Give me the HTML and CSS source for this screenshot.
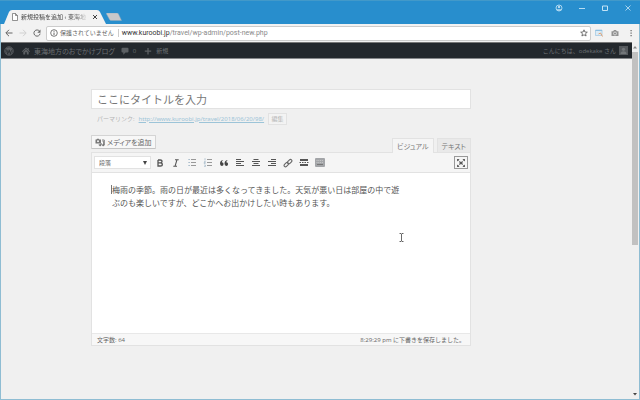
FILE: index.html
```html
<!DOCTYPE html>
<html lang="ja">
<head>
  <meta charset="UTF-8">
  <title>新規投稿を追加 ‹ 東海地方のおでかけブログ</title>
  <link rel="stylesheet" href="styles.css">
</head>
<body>

  <div class="window">
    <header class="titlebar">
      <div class="tab">
        <svg class="tab-shape" viewBox="0 0 102 14" preserveAspectRatio="none"><path d="M0 14 L5 2 Q6 0 8 0 H93 Q95 0 96 2 L102 14Z" fill="#f2f2f2"/></svg>
        <svg class="tab-icon" viewBox="0 0 6 8"><path d="M.5.5H3.5L5.5 2.5V7.5H.5ZM3.5.5V2.5H5.5" fill="#fff" stroke="#666" stroke-width=".7"/></svg>
        <span class="tab-title">新規投稿を追加 ‹ 東海地</span>
        <button class="tab-close" aria-label="閉じる"><svg viewBox="0 0 6 6"><path d="M1 1L5 5M5 1L1 5" stroke="#444"/></svg></button>
      </div>
      <svg class="new-tab" viewBox="0 0 16 8"><path d="M1 0H11Q12 0 12.5 1L15.5 7.5H5Q4 7.5 3.5 6.5L.5 1Q0 0 1 0Z" fill="#c8c8ca" stroke="#8aa9bd" stroke-width=".5"/></svg>
      <div class="controls">
        <button aria-label="ユーザー"><svg viewBox="0 0 8 8"><circle cx="4" cy="4" r="3" fill="none" stroke="#b7dcf2" stroke-width=".9"/><circle cx="4" cy="3" r="1.2" fill="#b7dcf2"/><path d="M1.5 5.2H6.5Q5.8 6.8 4 6.8T1.5 5.2Z" fill="#b7dcf2"/></svg></button>
        <button aria-label="最小化"><svg viewBox="0 0 8 8"><path d="M1 4.5H7" stroke="#b7dcf2"/></svg></button>
        <button aria-label="最大化"><svg viewBox="0 0 8 8"><path d="M1.5 2H6.5V6.5H1.5Z" fill="none" stroke="#c4e3f5"/></svg></button>
        <button aria-label="ウィンドウを閉じる"><svg viewBox="0 0 8 8"><path d="M1.5 1.5L6.5 6.5M6.5 1.5L1.5 6.5" stroke="#b7dcf2" stroke-width=".9"/></svg></button>
      </div>
    </header>

    <nav class="browser-bar">
      <button aria-label="戻る"><svg viewBox="0 0 8 8"><path d="M7.5 4H1M4 .8L.8 4L4 7.2" fill="none" stroke="#666"/></svg></button>
      <button aria-label="進む"><svg viewBox="0 0 8 8"><path d="M.5 4H7M4 .8L7.2 4L4 7.2" fill="none" stroke="#d0d0d0"/></svg></button>
      <button aria-label="再読み込み"><svg viewBox="0 0 8 8"><path d="M6.6 2.3A3.1 3.1 0 1 0 7.1 4.6" fill="none" stroke="#666"/><path d="M7.5.5V3.7H4.3Z" fill="#666"/></svg></button>
      <div class="address">
        <svg class="info" viewBox="0 0 8 8"><circle cx="4" cy="4" r="3.3" fill="none" stroke="#555" stroke-width=".8"/><path d="M4 3.5V6M4 1.9V2.8" stroke="#555" stroke-width=".9"/></svg>
        <span class="secure">保護されていません</span>
        <span class="url"><b>www.kuroobi.jp</b>/travel/wp-admin/post-new.php</span>
        <button aria-label="ブックマーク"><svg viewBox="0 0 8 8"><path d="M4 .8L4.9 3L7.3 3.2L5.5 4.7L6.1 7L4 5.8L1.9 7L2.5 4.7L.7 3.2L3.1 3Z" fill="none" stroke="#555" stroke-width=".8"/></svg></button>
      </div>
      <div class="extensions">
        <button aria-label="拡張機能"><svg viewBox="0 0 8 8"><path d="M.5 1H7V6.5H.5Z" fill="#dcebf5" stroke="#9cc5e2" stroke-width=".7"/><path d="M.5 1.5H7" stroke="#8fbfe0"/><path d="M3.5 5L5.5 4L7.5 7.5" fill="none" stroke="#e2a070"/></svg></button>
        <button aria-label="カメラ"><svg viewBox="0 0 8 8"><path d="M.5 2.2H2.2L3 1H5L5.8 2.2H7.5V7H.5Z" fill="#929292"/><circle cx="4" cy="4.5" r="1.5" fill="none" stroke="#eee" stroke-width=".7"/></svg></button>
        <button aria-label="メニュー"><svg viewBox="0 0 8 8"><path d="M3.5 1H4.7V2.2H3.5ZM3.5 3.5H4.7V4.7H3.5ZM3.5 6H4.7V7.2H3.5Z" fill="#666"/></svg></button>
      </div>
    </nav>

    <div class="viewport">
      <div class="page">
        <nav class="adminbar">
          <a href="#" aria-label="WordPress"><svg class="wp" viewBox="0 0 10 10"><circle cx="5" cy="5" r="4.4" fill="none" stroke="#5c6064" stroke-width=".7"/><circle cx="5" cy="5" r="3.7" fill="#5c6064"/><path d="M1.8 3.4L3.7 8L5 4.4L6.4 8L7.9 3.8M2.8 3.4L4.2 7M5 3.4L6.6 7.2" fill="none" stroke="#23282d" stroke-width=".7"/></svg></a>
          <a href="#" class="site"><svg viewBox="0 0 8 8"><path d="M0 4.3L4 .6L5.6 2V1H6.7V3L8 4.3L7.4 5L4 1.9L.6 5ZM1.3 5L4 2.6L6.7 5V7.6H4.8V5.2H3.2V7.6H1.3Z" fill="#5c6064"/></svg>東海地方のおでかけブログ</a>
          <a href="#" class="comments"><svg viewBox="0 0 8 8"><path d="M1.5.7H6.5Q7.5.7 7.5 1.7V4.5Q7.5 5.5 6.5 5.5H4.5L2.3 7.8V5.5H1.5Q.5 5.5.5 4.5V1.7Q.5.7 1.5.7Z" fill="#5c6064"/></svg>0</a>
          <a href="#" class="new"><svg viewBox="0 0 8 8"><path d="M4 1V7.5M.8 4.2H7.2" stroke="#5c6064" stroke-width="1.3"/></svg>新規</a>
          <a href="#" class="account">こんにちは、odekake さん<svg viewBox="0 0 9 9"><path d="M0 0H9V9H0Z" fill="#55595d"/><circle cx="4.5" cy="3.3" r="1.6" fill="#73777a"/><path d="M1.5 8Q1.5 5.2 4.5 5.2T7.5 8Z" fill="#73777a"/></svg></a>
        </nav>

        <main class="editor-column">
          <input class="post-title" type="text" aria-label="タイトル" placeholder="ここにタイトルを入力">
          <div class="permalink">
            <span>パーマリンク:</span>
            <a href="#">http://www.kuroobi.jp/travel/2018/06/20/98/</a>
            <button>編集</button>
          </div>

          <div class="editor-head">
            <button class="add-media"><svg viewBox="0 0 10 9"><path d="M.5 1.5H1.5L2 .7H3.8L4.3 1.5H6V5.5H.5Z" fill="#777"/><circle cx="3" cy="3.3" r="1" fill="#f7f7f7"/><path d="M7 2H9.3V7H8.6V3.3H7.5M4 6.5V7.2M6.2 5V7" fill="none" stroke="#777" stroke-width=".9"/><circle cx="5.2" cy="7.2" r="1.1" fill="#777"/><circle cx="8.2" cy="7.2" r="1.1" fill="#777"/></svg>メディアを追加</button>
            <div class="mode-tabs">
              <button class="mode active">ビジュアル</button>
              <button class="mode">テキスト</button>
            </div>
          </div>

          <section class="editor">
            <div class="tools">
              <div class="format">
                <select aria-label="書式"><option>段落</option></select>
              </div>
              <button aria-label="太字"><svg viewBox="0 0 10 10"><path d="M3 2H5.3Q7 2 7 3.4T5.3 4.8H3M5.3 4.8Q7.3 4.8 7.3 6.4T5.3 8H3V2" fill="none" stroke="#555" stroke-width="1.3"/></svg></button>
              <button aria-label="斜体"><svg viewBox="0 0 10 10"><path d="M4 1.7H7.7M2.3 8.3H6M6 1.7L4 8.3" stroke="#555" stroke-width="1.1"/></svg></button>
              <button aria-label="箇条書き"><svg viewBox="0 0 10 10"><path d="M4 1.5H9M4 4.5H9M4 7.5H9" stroke="#999"/><path d="M1.5 1.5H2.7M1.5 4.5H2.7M1.5 7.5H2.7" stroke="#8fa9bd" stroke-width="1.2"/></svg></button>
              <button aria-label="番号付きリスト"><svg viewBox="0 0 10 10"><path d="M4 1.5H9M4 4.5H9M4 7.5H9" stroke="#999"/><path d="M2 .2V2.5M1.2 3.5H2.3V4.5H1.2V5.5H2.5M1.2 7H2.4V8.5H1.2" fill="none" stroke="#8fa9bd" stroke-width=".6"/></svg></button>
              <button aria-label="引用"><svg viewBox="0 0 10 10"><path d="M4.5 2Q3 2.4 2.8 4.2Q4.6 4.3 4.6 6Q4.5 8 2.8 8Q1 8 1 5.6Q1.1 2.2 4.5 2ZM9 2Q7.5 2.4 7.3 4.2Q9.1 4.3 9.1 6Q9 8 7.3 8Q5.5 8 5.5 5.6Q5.6 2.2 9 2Z" fill="#444"/></svg></button>
              <button aria-label="左寄せ"><svg viewBox="0 0 10 10"><path d="M1 1.5H6M1 3.5H9M1 5.5H6M1 7.5H9" stroke="#555"/></svg></button>
              <button aria-label="中央揃え"><svg viewBox="0 0 10 10"><path d="M2.5 1.5H7.5M1 3.5H9M2.5 5.5H7.5M1 7.5H9" stroke="#555"/></svg></button>
              <button aria-label="右寄せ"><svg viewBox="0 0 10 10"><path d="M4 1.5H9M1 3.5H9M4 5.5H9M1 7.5H9" stroke="#555"/></svg></button>
              <button aria-label="リンクの挿入"><svg viewBox="0 0 10 10"><g fill="none" stroke="#666" stroke-width="1.1"><rect x="4.2" y="2.2" width="5" height="2.8" rx="1.4" transform="rotate(-45 6.7 3.6)"/><rect x=".8" y="5.2" width="5" height="2.8" rx="1.4" transform="rotate(-45 3.3 6.6)"/></g></svg></button>
              <button aria-label="続きを読む"><svg viewBox="0 0 10 10"><path d="M1 1H9V3H1ZM1 6H9V8H1Z" fill="#555"/><path d="M.5 4.5H9.5" stroke="#555" stroke-dasharray="1.5 1"/></svg></button>
              <button aria-label="ツールバー切り替え"><svg viewBox="0 0 10 10"><rect width="10" height="9" rx="1" fill="#a3a5a8"/><path d="M1.5 2.5H8.5M1.5 4.5H8.5" stroke="#d0d0d0" stroke-width=".8" stroke-dasharray="1 .8"/><path d="M2 6.5H8" stroke="#777"/></svg></button>
              <button class="fullscreen" aria-label="集中執筆モード"><svg viewBox="0 0 10 10"><path d="M1 1H3.6L1 3.6ZM9 1V3.6L6.4 1ZM1 9V6.4L3.6 9ZM9 9H6.4L9 6.4Z" fill="#555"/><path d="M1.5 1.5L8.5 8.5M8.5 1.5L1.5 8.5" stroke="#777" stroke-width=".7"/><path d="M3.5 3.7H6.5V6.3H3.5Z" fill="#555"/></svg></button>
            </div>
            <div class="writing">
              <textarea aria-label="本文" spellcheck="false">梅雨の季節。雨の日が最近は多くなってきました。天気が悪い日は部屋の中で遊ぶのも楽しいですが、どこかへお出かけしたい時もあります。</textarea>
              <span class="caret"></span>
            </div>
            <footer class="status">
              <span>文字数: 64</span>
              <span>8:29:29 pm に下書きを保存しました。</span>
            </footer>
          </section>
        </main>
      </div>

      <div class="scrollbar">
        <svg viewBox="0 0 6 6"><path d="M1 4.5L3 2L5 4.5Z" fill="#888"/></svg>
        <div class="thumb"></div>
        <svg class="down" viewBox="0 0 6 6"><path d="M1 2L3 4.5L5 2Z" fill="#444"/></svg>
      </div>
    </div>

    <svg class="pointer" viewBox="0 0 5 9"><path d="M.5.5H2L2.5 1L3 .5H4.5M2.5 1V8M.5 8.5H2L2.5 8L3 8.5H4.5" fill="none" stroke="#444" stroke-width=".8"/></svg>
  </div>

</body>
</html>
```
FILE: styles.css
```css
* {
  box-sizing: border-box;
}
body {
  margin: 0;
  font-family: "Open Sans", "Noto Sans CJK JP", sans-serif;
  font-size: 6px;
  color: #666;
}
button, input, select, textarea {
  font: inherit;
  color: inherit;
  margin: 0;
  padding: 0;
  border: 0;
  background: none;
}
svg {
  display: block;
  flex: none;
  width: 8px;
  height: 8px;
}
a {
  color: inherit;
  text-decoration: none;
}
.window {
  position: relative;
  display: flex;
  flex-direction: column;
  height: 100vh;
  border: 1px solid #8fbdd3;
  border-top: 0;
  background: #f0f0f0;
}

/* browser frame */
.titlebar {
  display: flex;
  height: 24px;
  margin: 0 -1px;
  padding-left: 4px;
  background: #288ecd;
  border-top: 1px solid #4299c9;
}
.tab {
  position: relative;
  display: flex;
  align-items: center;
  align-self: flex-end;
  width: 102px;
  height: 14px;
  padding: 0 8px;
}
.tab-shape {
  position: absolute;
  left: 0;
  top: 0;
  width: 100%;
  height: 100%;
}
.tab-icon {
  position: relative;
  width: 6px;
  margin-right: 3px;
}
.tab-title {
  position: relative;
  flex: 1;
  white-space: nowrap;
  line-height: 10px;
  color: #444;
  -webkit-mask-image: linear-gradient(90deg, #000 75%, transparent);
  mask-image: linear-gradient(90deg, #000 75%, transparent);
}
.tab-close {
  position: relative;
  margin-left: 3px;
}
.tab-close svg {
  width: 6px;
  height: 6px;
}
.new-tab {
  width: 16px;
  align-self: flex-end;
  margin-bottom: 3px;
}
.controls {
  display: flex;
  gap: 15px;
  height: 14px;
  margin-left: auto;
  padding-right: 8px;
}
.browser-bar {
  display: flex;
  align-items: center;
  gap: 6px;
  height: 18px;
  padding: 0 4px;
  background: #f2f2f2;
}
.address {
  display: flex;
  align-items: center;
  flex: 1;
  height: 15px;
  margin-left: -1px;
  padding: 0 2px 0 3px;
  background: #fff;
  border: 1px solid #ccc;
  border-radius: 2px;
}
.secure {
  margin: 0 3px 0 2px;
  padding-right: 4px;
  border-right: 1px solid #ccc;
  line-height: 8px;
}
.url {
  flex: 1;
  font-family: Roboto, sans-serif;
  font-size: 7px;
  color: #888;
}
.url b {
  font-weight: normal;
  color: #333;
}
.extensions {
  display: flex;
  gap: 8px;
  margin-left: -2px;
}

/* page area */
.viewport {
  display: flex;
  flex: 1;
  min-height: 0;
}
.page {
  flex: 1;
}
.adminbar {
  display: flex;
  align-items: center;
  height: 17px;
  padding: 0 4px 0 3px;
  background: #23282d;
  border-top: 1px solid #777;
  border-bottom: 1px solid #85878a;
  color: #6b6f73;
}
.adminbar a {
  display: flex;
  align-items: center;
  gap: 4px;
}
.adminbar .wp {
  width: 10px;
  height: 10px;
}
.adminbar .site {
  margin-left: 8px;
  font-size: 7px;
  font-feature-settings: "palt";
}
.comments {
  margin-left: 6px;
}
.new {
  margin-left: 8px;
}
.adminbar .account {
  gap: 3px;
  margin-left: auto;
}
.account svg {
  width: 9px;
  height: 9px;
}
.scrollbar {
  display: flex;
  flex-direction: column;
  width: 7px;
  background: #f0f0f0;
}
.scrollbar svg {
  width: 6px;
  height: 6px;
  margin: 2px 0;
}
.thumb {
  width: 6px;
  height: 54%;
  background: #c1c1c1;
}
.scrollbar .down {
  margin-top: auto;
}

/* post form */
.editor-column {
  margin: 30px 161px 0 90px;
}
.post-title {
  display: block;
  width: 100%;
  height: 20px;
  padding: 0 5px;
  font-size: 11px;
  background: #fff;
  border: 1px solid #e2e2e2;
}
.post-title::placeholder {
  color: #777;
}
.permalink {
  display: flex;
  align-items: center;
  gap: 4px;
  height: 13px;
  margin-top: 3px;
  padding-left: 6px;
  color: #b4b4b4;
}
.permalink a {
  font-family: "Noto Sans", sans-serif;
  color: #9cc4d8;
  text-decoration: underline;
}
.permalink button {
  width: 19px;
  height: 12px;
  border: 1px solid #e2e2e2;
  background: #f3f3f3;
}
.editor-head {
  display: flex;
  justify-content: space-between;
  align-items: flex-start;
  margin-top: 10px;
  font-size: 7px;
  font-feature-settings: "palt";
}
.add-media {
  display: flex;
  align-items: center;
  gap: 2px;
  height: 14px;
  padding: 0 3px;
  background: #f7f7f7;
  border: 1px solid #d4d4d4;
  border-bottom-color: #c4c4c4;
  border-radius: 1px;
}
.add-media svg {
  width: 10px;
  height: 9px;
}
.mode-tabs {
  display: flex;
  gap: 3px;
  padding-top: 3px;
}
.mode {
  height: 14px;
  padding: 0 4px;
  background: #e9e9e9;
  border: 1px solid #e2e2e2;
  border-bottom: 0;
  color: #777;
}
.mode.active {
  position: relative;
  z-index: 1;
  height: 15px;
  margin-bottom: -1px;
  background: #f5f5f5;
}
.editor {
  border: 1px solid #e2e2e2;
  background: #fff;
}
.tools {
  display: flex;
  align-items: center;
  height: 20px;
  padding: 0 2px;
  background: #f5f5f5;
  border-bottom: 1px solid #e2e2e2;
}
.tools button {
  display: flex;
  justify-content: center;
  width: 16px;
}
.tools button svg {
  width: 10px;
  height: 10px;
}
.format {
  position: relative;
  width: 57px;
  margin-right: 1px;
}
.format::after {
  content: "";
  position: absolute;
  right: 4px;
  top: 5px;
  border: 2px solid transparent;
  border-top: 4px solid #444;
  border-bottom: 0;
}
.format select {
  display: block;
  width: 100%;
  height: 13px;
  padding: 0 4px;
  appearance: none;
  background: #fff;
  border: 1px solid #e2e2e2;
}
.tools .fullscreen {
  align-items: center;
  width: 14px;
  height: 13px;
  margin-left: auto;
  border: 1px solid #999;
}
.writing {
  position: relative;
}
.writing textarea {
  display: block;
  width: 100%;
  height: 160px;
  padding: 10px 66px 10px 20px;
  resize: none;
  outline: 0;
  font-size: 8px;
  line-height: 13px;
  color: #555;
}
.caret {
  position: absolute;
  left: 19px;
  top: 12px;
  width: 1px;
  height: 9px;
  background: #777;
}
.status {
  display: flex;
  align-items: center;
  justify-content: space-between;
  height: 12px;
  padding: 0 5px;
  background: #f7f7f7;
  border-top: 1px solid #e8e8e8;
}
.pointer {
  position: absolute;
  left: 398px;
  top: 233px;
  width: 5px;
  height: 9px;
}
```
